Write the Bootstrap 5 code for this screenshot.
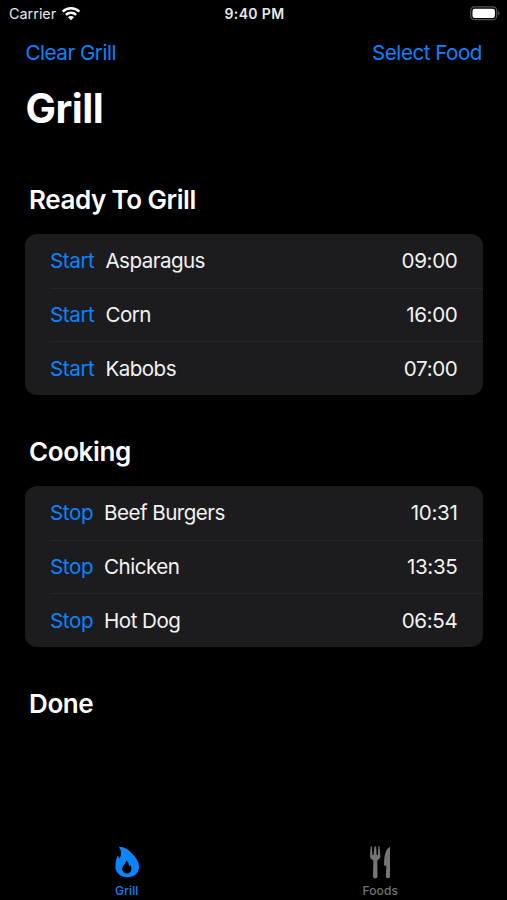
<!DOCTYPE html>
<html lang="en" data-bs-theme="dark">
<head>
<meta charset="utf-8">
<meta name="viewport" content="width=device-width, initial-scale=1">
<title>Grill</title>
<link href="https://cdn.jsdelivr.net/npm/bootstrap@5.3.0/dist/css/bootstrap.min.css" rel="stylesheet">
<style>
:root{--ios-blue:#0a84ff;--ios-card:#1c1c1e}
body{background:#000;color:#fff;font-family:Inter,"Liberation Sans",sans-serif;font-size:20.6px;line-height:26px;height:900px;overflow:hidden;letter-spacing:-.48px}
.status-bar{height:27px;padding:0 7px 0 9px;font-size:14.4px;line-height:27px;color:#e8e8e8}
.status-bar>div{flex:1 1 0}
.carrier{letter-spacing:0}
.wifi{margin-left:5px}
.clock{font-weight:600;font-size:14px;letter-spacing:.35px}
.nav-actions{height:52px;padding:0 25px 0 25.5px}
.ios-link{color:var(--ios-blue);font-size:inherit;line-height:26px;text-decoration:none}
.page-title{font-size:40.6px;font-weight:700;line-height:50px;margin:5px 0 0 25.5px;letter-spacing:-.5px}
.section-title{font-size:26px;font-weight:600;line-height:32px;margin:0 0 18px 29px;letter-spacing:-.4px;word-spacing:-.5px}
.first-section{margin-top:50px}
.food-section{margin-bottom:41px}
.food-list{margin:0 24.5px 0 25px;border-radius:12px;background:var(--ios-card);overflow:hidden}
.food-item{margin-left:25px;padding:1px 25px 0 0;height:53.67px;background:none;color:#f2f2f2;border:0}
.food-item+.food-item{box-shadow:inset 0 1px #262628}
.food-item .ios-link{letter-spacing:-.4px}
.food-name{margin-left:11px;letter-spacing:-.55px}
.food-time{letter-spacing:-.35px}
.tab-bar{height:60px;padding-top:6px;font-size:12px;line-height:14px;font-weight:500;letter-spacing:.1px}
.tab-bar svg{display:block;height:34px;margin-bottom:4px}
.tab-active{color:var(--ios-blue)}
.tab-idle{color:#757575}
</style>
</head>
<body class="d-flex flex-column">
<header>
  <div class="status-bar d-flex align-items-center">
    <div class="d-flex align-items-center"><span class="carrier">Carrier</span>
      <svg class="wifi" width="20" height="15" viewBox="0 0 20 15" fill="none" stroke="#fff" stroke-width="2.5"><path d="M1.700 5.600a12 12 0 0 1 16.600 0M4.900 8.900a7.300 7.300 0 0 1 10.200 0"/><path d="M10 14.200 7 11.200a4.200 4.200 0 0 1 6 0z" fill="#fff" stroke="none"/></svg>
    </div>
    <div class="clock text-center">9:40 PM</div>
    <div class="d-flex justify-content-end">
      <svg width="30" height="15" viewBox="0 0 30 15"><rect x=".7" y=".9" width="26" height="12.800" rx="3.800" fill="none" stroke="#555" stroke-width="1.200"/><rect x="2.500" y="2.700" width="22.400" height="9.200" rx="2.200" fill="#fff"/><path d="M28 5v4.600q1.600-.8 1.600-2.300T28 5z" fill="#555"/></svg>
    </div>
  </div>
  <nav class="nav-actions d-flex justify-content-between align-items-center">
    <a class="ios-link" href="#">Clear Grill</a>
    <a class="ios-link" href="#">Select Food</a>
  </nav>
  <h1 class="page-title">Grill</h1>
</header>
<main class="flex-grow-1">
  <section class="food-section first-section">
    <h2 class="section-title">Ready To Grill</h2>
    <ul class="food-list list-group list-group-flush">
      <li class="food-item list-group-item d-flex align-items-center"><a class="ios-link" href="#">Start</a><span class="food-name">Asparagus</span><span class="food-time ms-auto">09:00</span></li>
      <li class="food-item list-group-item d-flex align-items-center"><a class="ios-link" href="#">Start</a><span class="food-name">Corn</span><span class="food-time ms-auto">16:00</span></li>
      <li class="food-item list-group-item d-flex align-items-center"><a class="ios-link" href="#">Start</a><span class="food-name">Kabobs</span><span class="food-time ms-auto">07:00</span></li>
    </ul>
  </section>
  <section class="food-section">
    <h2 class="section-title">Cooking</h2>
    <ul class="food-list list-group list-group-flush">
      <li class="food-item list-group-item d-flex align-items-center"><a class="ios-link" href="#">Stop</a><span class="food-name">Beef Burgers</span><span class="food-time ms-auto">10:31</span></li>
      <li class="food-item list-group-item d-flex align-items-center"><a class="ios-link" href="#">Stop</a><span class="food-name">Chicken</span><span class="food-time ms-auto">13:35</span></li>
      <li class="food-item list-group-item d-flex align-items-center"><a class="ios-link" href="#">Stop</a><span class="food-name">Hot Dog</span><span class="food-time ms-auto">06:54</span></li>
    </ul>
  </section>
  <section><h2 class="section-title">Done</h2></section>
</main>
<footer class="tab-bar row g-0 text-center">
  <div class="col d-flex flex-column align-items-center tab-active">
    <svg width="26" viewBox="0 0 26 34"><path fill="currentColor" fill-rule="evenodd" d="M4.800.8C10.500 1 15 3.800 18 7.600 22 11.500 25 16 25 21c0 6.500-5 10.300-11.700 10.300S1.400 27 1.400 20.500C1.400 16.500 2.200 13 3.800 9.200c.3 1.300.8 2.300 1.700 3.200C7.800 9 7.700 5 4.800.8zM12 14.400c.5 3.300-3.800 4.800-3.800 8.600 0 2.700 2 4.500 4.700 4.500s4.500-1.900 4.500-4.500c0-1.600-.4-3-1.300-4.200-.1.900-.5 1.500-1 1.900.1-2.900-.9-5-3.100-6.300z"/></svg>Grill
  </div>
  <div class="col d-flex flex-column align-items-center tab-idle">
    <svg width="22" viewBox="0 0 22 34"><path fill="currentColor" d="M1.700.5H3l.3 8.300c0 .6 1.300.6 1.300 0L5.300.5h1.800l.6 8.300c0 .6 1.300.6 1.300 0L9.300.5h1.300l.8 9.500c.1 2-1 3.300-3.100 4.300L8.500 30.500c0 2.500-4.500 2.500-4.500 0l.3-16.200C2.100 13.300.9 12 1 10z"/><path fill="currentColor" d="M21 .8v29.700c0 2.400-4.200 2.400-4.200 0l.5-10.700h-1.200c-.8 0-1.200-.4-1.100-1.200C15.300 10 16.200 3.500 21 .8z"/></svg>Foods
  </div>
</footer>
<script src="https://cdn.jsdelivr.net/npm/bootstrap@5.3.0/dist/js/bootstrap.bundle.min.js"></script>
</body>
</html>
